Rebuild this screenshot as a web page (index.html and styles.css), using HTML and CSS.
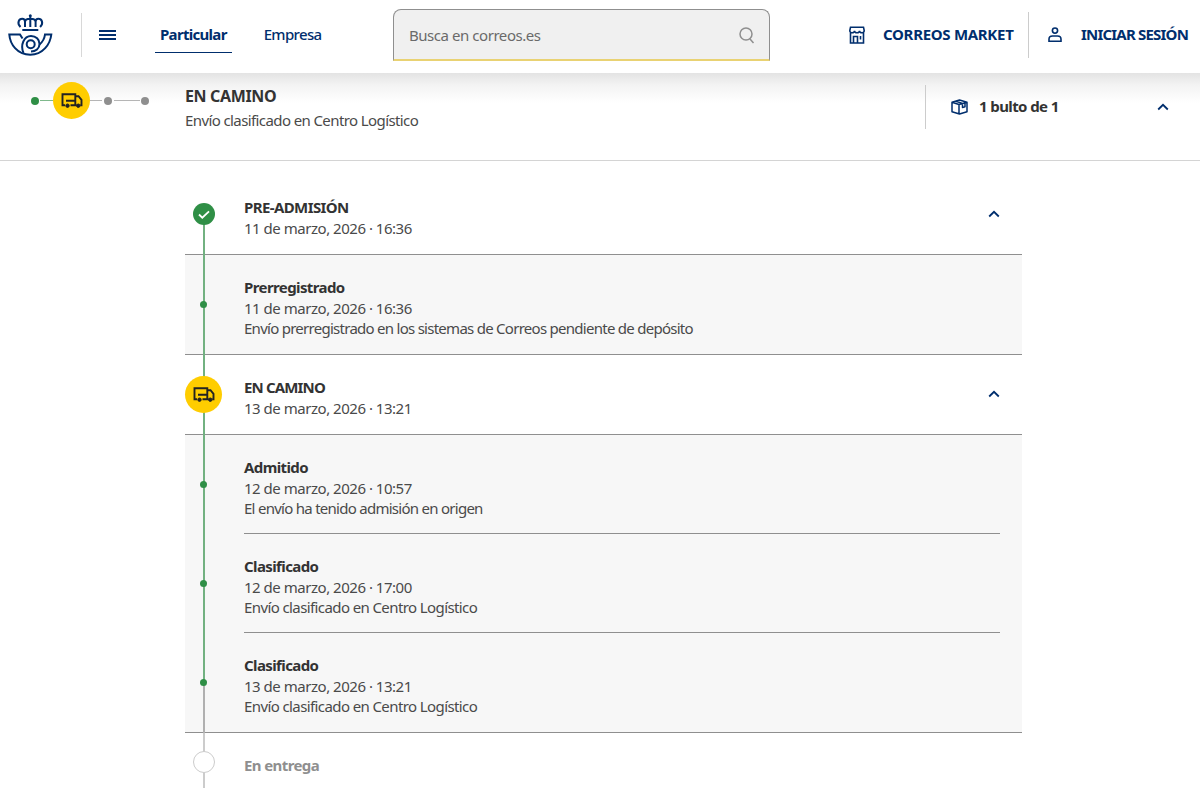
FILE: index.html
```
<!DOCTYPE html>
<html lang="es">
<head>
  <meta charset="UTF-8" />
  <meta name="viewport" content="width=device-width, initial-scale=1.0"/>
  <title>Correos - Localizador de envíos</title>
  <link rel="stylesheet" href="styles.css">
</head>
<body>
  <svg width="0" height="0" class="sprite">
    <symbol id="truck" viewBox="0 0 22 17">
      <path d="M4 13.200H1.500V2.200h12.800v11H9.500M5 8.800h9.300M14.300 4.200h3.200l3 3.600v5.400h-1.300M14.300 13.200h1.500" fill="none" stroke="currentColor" stroke-width="1.900"/>
      <circle cx="6.500" cy="13.700" r="1.700" fill="currentColor" stroke="currentColor"/>
      <circle cx="17.300" cy="13.700" r="1.700" fill="currentColor" stroke="currentColor"/>
    </symbol>
    <symbol id="chevron" viewBox="0 0 12 8">
      <path d="M1.200 6.500 6 1.800l4.800 4.700" fill="none" stroke="currentColor" stroke-width="1.800"/>
    </symbol>
  </svg>

  <header class="header">
    <a class="logo" href="#">
      <svg width="45" height="43" viewBox="0 0 45 43" fill="none" stroke="currentColor" stroke-width="2">
        <circle cx="22.300" cy="1.800" r="1.500" fill="currentColor" stroke="none"/>
        <path d="M22.300 3v10M12.500 13c-4-4-1.500-8.300 1.700-8.300 2 0 2.800 1.200 2.800 3V13M17 8c0-2 2-3.300 5.300-3.300S27.600 6 27.600 8v5M27.600 7.700c0-1.800.8-3 2.800-3 3.200 0 5.700 4.300 1.700 8.300"/>
        <path d="M14.300 16h16"/>
        <path d="M14.500 24.500 12 20.500H1.300C2 30 9 40.700 22.300 40.700 35 40.700 42.300 30 43.300 20.500h-6.300c-.5 4-2.500 7.500-5.500 10"/>
        <path d="M15.500 39c-3.500-8 .500-17 7.500-17 5 0 8.500 3.500 8.500 8s-3.800 7.500-8.500 7.500"/>
        <circle cx="22.700" cy="30.300" r="4"/>
      </svg>
    </a>
    <button class="menu" aria-label="Menú"><span></span><span></span><span></span></button>
    <nav class="nav">
      <a class="nav-link active" href="#">Particular</a>
      <a class="nav-link" href="#">Empresa</a>
    </nav>
    <div class="search">
      <span class="search-text">Busca en correos.es</span>
      <svg width="16" height="18" viewBox="0 0 16 18" fill="none" stroke="currentColor" stroke-width="1.500">
        <circle cx="7" cy="8" r="6"/>
        <path d="M10.800 12.800 14.500 17"/>
      </svg>
    </div>
    <a class="market" href="#">
      <svg width="16" height="18" viewBox="0 0 16 18" fill="none" stroke="currentColor" stroke-width="1.600">
        <path d="M1.500 7v10h13V7M1.500 1.200h13l.7 3.300c0 1.400-1 2.300-2.200 2.300s-2.500-.8-2.500-2c0 1.200-1.200 2-2.500 2s-2.500-.8-2.500-2c0 1.200-1.200 2-2.500 2S.8 5.900.8 4.500z"/>
        <path d="M4.500 17v-6.500h4V17M11.500 10v3.500"/>
      </svg>
      <span>CORREOS MARKET</span>
    </a>
    <a class="login" href="#">
      <svg width="14" height="16" viewBox="0 0 14 16" fill="none" stroke="currentColor" stroke-width="1.600">
        <circle cx="7" cy="3.600" r="2.600"/>
        <path d="M1 14.200v-2C1 10 2.300 9 4.500 9h5c2.200 0 3.500 1 3.500 3.200v2z"/>
      </svg>
      <span>INICIAR SESIÓN</span>
    </a>
  </header>

  <section class="summary">
    <div class="steps">
      <i class="step done"></i>
      <i class="link done"></i>
      <span class="truck"><svg width="22" height="17"><use href="#truck"/></svg></span>
      <i class="link short"></i>
      <i class="step"></i>
      <i class="link long"></i>
      <i class="step"></i>
    </div>
    <div class="status">
      <h1>EN CAMINO</h1>
      <p>Envío clasificado en Centro Logístico</p>
    </div>
    <div class="parcels">
      <svg width="17" height="16" viewBox="0 0 17 16" fill="none" stroke="currentColor" stroke-width="1.500" stroke-linejoin="round">
        <path d="M1 3.200 8.500 1 16 3.200v9.600L8.500 15 1 12.800zM1 3.200l7 2.300 8-2.300M8 5.500V15M4.800 2.200l6.700 2.200v4.200l2.500-.8V4"/>
      </svg>
      <span>1 bulto de 1</span>
      <svg class="chevron" width="12" height="8"><use href="#chevron"/></svg>
    </div>
  </section>

  <main class="timeline">
    <div class="stage">
      <div class="rail first"><span class="check">
        <svg width="12" height="9" viewBox="0 0 12 9"><path d="M1 4.500 4.300 7.700 11 1.300" fill="none" stroke="#fff" stroke-width="1.800"/></svg>
      </span></div>
      <div class="info">
        <h2>PRE-ADMISIÓN</h2>
        <p class="date">11 de marzo, 2026 · 16:36</p>
      </div>
      <svg class="chevron" width="12" height="8"><use href="#chevron"/></svg>
    </div>
    <div class="event last">
      <div class="rail"><i class="dot"></i></div>
      <div class="info">
        <h3>Prerregistrado</h3>
        <p class="date">11 de marzo, 2026 · 16:36</p>
        <p>Envío prerregistrado en los sistemas de Correos pendiente de depósito</p>
      </div>
    </div>

    <div class="stage current">
      <div class="rail"><span class="truck"><svg width="22" height="17"><use href="#truck"/></svg></span></div>
      <div class="info">
        <h2>EN CAMINO</h2>
        <p class="date">13 de marzo, 2026 · 13:21</p>
      </div>
      <svg class="chevron" width="12" height="8"><use href="#chevron"/></svg>
    </div>
    <div class="event">
      <div class="rail"><i class="dot"></i></div>
      <div class="info">
        <h3>Admitido</h3>
        <p class="date">12 de marzo, 2026 · 10:57</p>
        <p>El envío ha tenido admisión en origen</p>
      </div>
    </div>
    <div class="event sorted">
      <div class="rail"><i class="dot"></i></div>
      <div class="info">
        <h3>Clasificado</h3>
        <p class="date">12 de marzo, 2026 · 17:00</p>
        <p>Envío clasificado en Centro Logístico</p>
      </div>
    </div>
    <div class="event sorted last">
      <div class="rail half"><i class="dot"></i></div>
      <div class="info">
        <h3>Clasificado</h3>
        <p class="date">13 de marzo, 2026 · 13:21</p>
        <p>Envío clasificado en Centro Logístico</p>
      </div>
    </div>

    <div class="stage pending">
      <div class="rail"><span class="ring"></span></div>
      <div class="info"><h2>En entrega</h2></div>
    </div>
  </main>
</body>
</html>
```

FILE: styles.css
```
* {
  margin: 0;
  padding: 0;
  box-sizing: border-box;
}

body {
  font-family: "Noto Sans", "Open Sans", sans-serif;
  font-size: 15px;
  letter-spacing: -0.6px;
  background-color: #fff;
  color: #4a4a4a;
  height: 100vh;
  overflow: hidden;
}

a {
  color: inherit;
  text-decoration: none;
}

svg {
  display: block;
  flex-shrink: 0;
}

.sprite {
  position: absolute;
}

/* Header */
.header {
  display: flex;
  height: 73px;
  color: #002e6d;
  background-color: #fff;
}

.logo {
  width: 82px;
  height: 44px;
  margin-top: 13px;
  padding: 1px 0 0 8px;
  border-right: 1px solid #d8d8d8;
}

.menu {
  display: flex;
  flex-direction: column;
  gap: 2px;
  width: 17px;
  margin: 30px 0 0 17px;
  border: none;
  background: none;
}

.menu span {
  height: 2px;
  background-color: #002e6d;
}

.nav {
  display: flex;
  gap: 27px;
  width: 238px;
  margin: 16px 0 0 39px;
}

.nav-link {
  height: 37px;
  padding: 0 5px;
  line-height: 36px;
  font-weight: 500;
  letter-spacing: -0.65px;
  white-space: nowrap;
}

.nav-link.active {
  font-weight: 700;
  letter-spacing: -0.7px;
  border-bottom: 1px solid #002e6d;
}

.search {
  display: flex;
  align-items: center;
  justify-content: space-between;
  width: 377px;
  height: 52px;
  margin-top: 9px;
  padding: 0 14px 0 15px;
  border: 1px solid #8f8f8f;
  border-bottom: 2px solid #e9d273;
  border-radius: 8px 8px 0 0;
  background-color: #f0f0f0;
  color: #6a6a6a;
  letter-spacing: -0.45px;
}

.search svg {
  color: #8f8f8f;
}

.market,
.login {
  display: flex;
  align-items: center;
  height: 46px;
  margin-top: 12px;
  font-weight: 700;
  white-space: nowrap;
}

.market span,
.login span {
  padding-bottom: 2px;
}

.market {
  gap: 18px;
  width: 180px;
  margin-left: 79px;
  border-right: 1px solid #ccc;
  letter-spacing: -0.3px;
}

.login {
  gap: 19px;
  margin-left: 19px;
  letter-spacing: -0.8px;
}

/* Summary */
.summary {
  display: flex;
  height: 88px;
  border-bottom: 1px solid #d4d4d4;
  background: linear-gradient(#e3e3e3, #f3f3f3 12px, #fff 30px);
}

.steps {
  display: flex;
  align-items: center;
  width: 154px;
  height: 37px;
  margin: 9px 0 0 31px;
}

.step {
  width: 8px;
  height: 8px;
  border-radius: 50%;
  background-color: #8f8f8f;
}

.step.done {
  background-color: #2f8f46;
}

.link {
  width: 13px;
  height: 1px;
  background-color: #b5b5b5;
}

.link.done {
  margin-left: 1px;
  background-color: #7fb98c;
}

.link.short {
  width: 12px;
  margin-right: 2px;
}

.link.long {
  width: 26px;
  margin: 0 1px 0 2px;
}

.truck {
  display: flex;
  align-items: center;
  justify-content: center;
  width: 37px;
  height: 37px;
  border-radius: 50%;
  background-color: #ffcd00;
  color: #222;
}

.status {
  width: 740px;
  padding-top: 13px;
}

.status h1 {
  font-size: 16px;
  line-height: 21px;
  letter-spacing: -0.35px;
  color: #333;
}

.status p {
  line-height: 27px;
}

.parcels {
  display: flex;
  align-items: center;
  width: 244px;
  height: 44px;
  margin-top: 12px;
  padding-left: 25px;
  border-left: 1px solid #ccc;
  color: #002e6d;
}

.parcels span {
  margin-left: 11px;
  padding-bottom: 2px;
  font-weight: 700;
  color: #333;
}

.parcels .chevron {
  margin-left: auto;
}

/* Timeline */
.timeline {
  width: 837px;
  margin: 14px 0 0 185px;
}

.stage,
.event {
  display: flex;
}

.stage {
  height: 80px;
  padding-right: 22px;
  border-bottom: 1px solid #8f8f8f;
}

.stage .chevron {
  align-self: center;
  margin-bottom: 1px;
  color: #002e6d;
}

.event {
  height: 99px;
  padding-right: 22px;
  background-color: #f7f7f7;
}

.event.last {
  height: 100px;
  border-bottom: 1px solid #8f8f8f;
}

.event .info {
  border-bottom: 1px solid #8f8f8f;
}

.event.last .info {
  border-bottom: none;
}

.rail {
  display: flex;
  align-items: center;
  justify-content: center;
  width: 37px;
  margin: 0 22px -1px 0;
  padding-bottom: 2px;
  background: linear-gradient(#72b181, #72b181) 18px 0 / 2px 100% no-repeat;
}

.rail.first {
  background-position: 18px 40px;
}

.rail.half {
  background-image: linear-gradient(#72b181 50%, #b0b0b0 50%);
}

.info {
  flex: 1;
  padding-top: 21px;
}

.info h2,
.info h3 {
  font-size: 15px;
  line-height: 22px;
  letter-spacing: -0.6px;
  color: #333;
}

.current h2 {
  letter-spacing: -0.85px;
}

.info p {
  line-height: 20px;
  letter-spacing: -0.73px;
}

.sorted p {
  letter-spacing: -0.6px;
}

.info .date {
  letter-spacing: -0.48px;
}

.check {
  display: flex;
  align-items: center;
  justify-content: center;
  width: 22px;
  height: 22px;
  border-radius: 50%;
  background-color: #2f8f46;
}

.dot {
  width: 7px;
  height: 7px;
  border-radius: 50%;
  background-color: #2f8f46;
}

.stage.pending {
  height: 60px;
  border-bottom: none;
}

.pending .rail {
  align-items: flex-start;
  padding-top: 18px;
  background-image: linear-gradient(#ccc, #ccc);
}

.ring {
  width: 22px;
  height: 22px;
  border: 1px solid #ccc;
  border-radius: 50%;
  background-color: #fff;
}

.pending .info h2 {
  color: #8f8f8f;
}
```
